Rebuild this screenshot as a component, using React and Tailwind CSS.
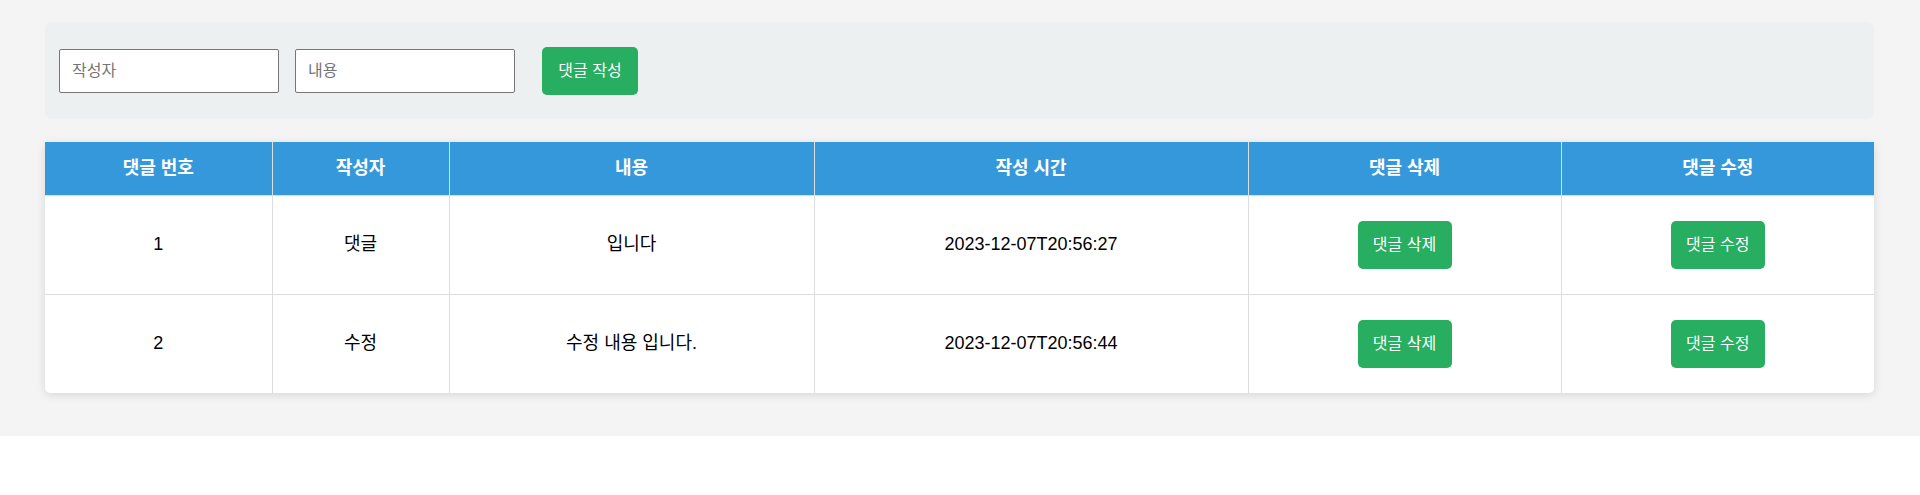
import { useState } from "react";

const comments = [
  { id: 1, writer: "댓글", content: "입니다", createdAt: "2023-12-07T20:56:27" },
  { id: 2, writer: "수정", content: "수정 내용 입니다.", createdAt: "2023-12-07T20:56:44" },
];

const headers = ["댓글 번호", "작성자", "내용", "작성 시간", "댓글 삭제", "댓글 수정"];

function GreenButton({ children, className = "" }) {
  return (
    <button
      type="button"
      className={`h-[48px] rounded-[5px] bg-[#27ae60] text-[16px] text-white ${className}`}
    >
      {children}
    </button>
  );
}

export default function App() {
  const [writer, setWriter] = useState("");
  const [content, setContent] = useState("");

  return (
    <div
      className="min-h-[495px] bg-white text-black"
      style={{ fontFamily: '"Liberation Sans", "Noto Sans CJK KR", sans-serif' }}
    >
      <div className="bg-[#f4f4f4] pl-[45px] pr-[46px] pt-[22px] pb-[43px]">
        {/* 작성 폼 */}
        <div className="flex h-[97px] items-center rounded-[7px] bg-[#ecf0f1] pl-[14px]">
          <input
            value={writer}
            onChange={(e) => setWriter(e.target.value)}
            placeholder="작성자"
            className="h-[44px] w-[220px] rounded-[2px] border border-[#767676] bg-white px-[12px] text-[16px] placeholder:text-[#757575] outline-none"
          />
          <input
            value={content}
            onChange={(e) => setContent(e.target.value)}
            placeholder="내용"
            className="ml-[16px] h-[44px] w-[220px] rounded-[2px] border border-[#767676] bg-white px-[12px] text-[16px] placeholder:text-[#757575] outline-none"
          />
          <GreenButton className="ml-[27px] w-[96px]">댓글 작성</GreenButton>
        </div>

        {/* 댓글 목록 */}
        <div className="mt-[23px] rounded-[5px] bg-white shadow-[0_2px_10px_rgba(0,0,0,0.12)]">
          <table className="w-full table-fixed border-collapse text-[18px]">
            <colgroup>
              <col className="w-[227px]" />
              <col className="w-[177px]" />
              <col className="w-[365px]" />
              <col className="w-[434px]" />
              <col className="w-[313px]" />
              <col />
            </colgroup>
            <thead>
              <tr className="h-[53px] bg-[#3498db]">
                {headers.map((h) => (
                  <th
                    key={h}
                    className="border border-[#dddddd] border-t-0 text-center font-bold text-white first:border-l-0 last:border-r-0"
                  >
                    {h}
                  </th>
                ))}
              </tr>
            </thead>
            <tbody>
              {comments.map((c, i) => {
                const last = i === comments.length - 1 ? "border-b-0" : "";
                return (
                  <tr key={c.id} className="h-[99px]">
                    <td className={`border border-[#dddddd] border-l-0 text-center ${last}`}>{c.id}</td>
                    <td className={`border border-[#dddddd] text-center ${last}`}>{c.writer}</td>
                    <td className={`border border-[#dddddd] text-center ${last}`}>{c.content}</td>
                    <td className={`border border-[#dddddd] text-center ${last}`}>{c.createdAt}</td>
                    <td className={`border border-[#dddddd] text-center ${last}`}>
                      <GreenButton className="w-[94px]">댓글 삭제</GreenButton>
                    </td>
                    <td className={`border border-[#dddddd] border-r-0 text-center ${last}`}>
                      <GreenButton className="w-[94px]">댓글 수정</GreenButton>
                    </td>
                  </tr>
                );
              })}
            </tbody>
          </table>
        </div>
      </div>
    </div>
  );
}
